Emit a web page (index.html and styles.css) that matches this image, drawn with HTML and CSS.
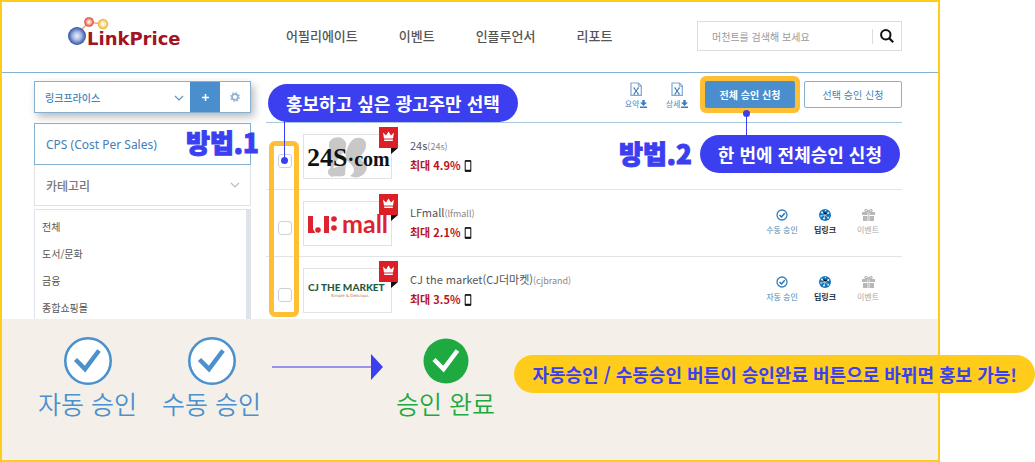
FILE: index.html
```html
<!DOCTYPE html>
<html lang="ko">
<head>
<meta charset="utf-8">
<title>LinkPrice</title>
<link rel="stylesheet" href="styles.css">
</head>
<body>
<svg class="defs" aria-hidden="true">
  <defs>
    <radialGradient id="blue"><stop offset="0" stop-color="#e9f0fa"/><stop offset=".45" stop-color="#a9bce2"/><stop offset="1" stop-color="#2f50a4"/></radialGradient>
    <radialGradient id="red"><stop offset="0" stop-color="#fff"/><stop offset=".4" stop-color="#f8c4b0"/><stop offset="1" stop-color="#dd3a24"/></radialGradient>
    <radialGradient id="gold"><stop offset="0" stop-color="#fff"/><stop offset=".4" stop-color="#fdeab4"/><stop offset="1" stop-color="#eeb02c"/></radialGradient>
    <symbol id="crown" viewBox="0 0 20 27">
      <path d="M12 21h7l-7 6z" fill="#111"/><path d="M0 0h19v21H0z" fill="#dc1f26"/>
      <path d="M4 5.500l3 3 2.500-4 2.500 4 3-3-1 6H5zM5.200 12.500h8.600v1.600H5.200z" fill="#fff"/>
    </symbol>
    <symbol id="phone" viewBox="0 0 8 12"><path d="M1.200.7h5.600v10.600H1.200z" fill="#fff" stroke="#111" stroke-width="1"/><path d="M1 .4h6v1.300H1zM1 9.800h6v1.700H1z" fill="#111"/></symbol>
    <symbol id="check" viewBox="0 0 12 12"><circle cx="6" cy="6" r="5" fill="#fff" stroke="#337fbd" stroke-width="1.300"/><path d="M3.500 6l2 2 3.200-3.700" fill="none" stroke="#2d6fae" stroke-width="1.500"/></symbol>
    <symbol id="link" viewBox="0 0 12 12"><circle cx="6" cy="6" r="6" fill="#1673b9"/><path d="M3 3.500l3 2.500 3.500-2M6 6l-1 4M6 6l3.500 3M2 7l4-1" stroke="#d8ecf8" stroke-width=".6"/><g fill="#d8ecf8"><circle cx="3" cy="3.500" r="1.100"/><circle cx="9.300" cy="4" r="1.100"/><circle cx="5" cy="9.500" r="1.100"/><circle cx="9.200" cy="8.700" r=".9"/><circle cx="2" cy="7" r=".8"/><circle cx="6.500" cy="1.500" r=".7"/></g></symbol>
    <symbol id="gift" viewBox="0 0 13 12"><path d="M0 3h5.600v3H0zM7.400 3H13v3H7.400zM1 7h4.600v5H1zM7.400 7H12v5H7.400z" fill="#b8b8b8"/><path d="M6.500 3v9" stroke="#ccc" stroke-width="1"/><path d="M6.500 3C5 3 2.500 2.500 3 1.200S6 .8 6.500 3C7 .8 9.500-.1 10 1.200S8 3 6.500 3" fill="none" stroke="#b8b8b8" stroke-width="1.200"/></symbol>
    <symbol id="excel" viewBox="0 0 12 14"><path d="M1 1h7.500L11.300 4v9.300H1z" fill="#fff" stroke="#7ba9d3" stroke-width="1.200"/><path d="M8.300 1v3.200h3" fill="none" stroke="#7ba9d3"/><path d="M4 6l4.300 6M8.300 6L4 12M3.300 6h1.800M7.300 6H9M3.300 12h1.800M7.300 12H9" stroke="#3d7cb9" stroke-width="1.100"/></symbol>
    <symbol id="down" viewBox="0 0 7 8"><path d="M2.300 0h2.400v2.500H7L3.500 6 0 2.500h2.300zM0 6.500h7V8H0z" fill="#3a7dbf"/></symbol>
  </defs>
</svg>

<div class="frame">
  <header class="header">
    <a class="logo" href="#">
      <svg width="114" height="32" viewBox="0 0 114 32" role="img" aria-label="LinkPrice">
        <path d="M11 16l10-10 13 2" fill="none" stroke="#e9a987" stroke-width="1.500"/>
        <circle cx="9" cy="20" r="9" fill="url(#blue)"/><circle cx="21" cy="6" r="4.800" fill="url(#red)"/><circle cx="35" cy="8" r="5.200" fill="url(#gold)"/>
        <text class="logo-word" x="19" y="29">LinkPrice</text>
      </svg>
    </a>
    <nav class="nav"><a href="#">어필리에이트</a><a href="#">이벤트</a><a href="#">인플루언서</a><a href="#">리포트</a></nav>
    <form class="search">
      <input type="search" placeholder="머천트를 검색해 보세요" aria-label="머천트 검색">
      <button type="button" aria-label="검색"><svg width="14" height="14" viewBox="0 0 14 14"><circle cx="5.800" cy="5.800" r="4.700" fill="none" stroke="#111" stroke-width="2"/><path d="M9.200 9.200l4 4" stroke="#111" stroke-width="2.200"/></svg></button>
    </form>
  </header>

  <div class="content">
    <aside class="side">
      <div class="account">
        <select aria-label="계정"><option>링크프라이스</option></select>
        <svg class="chevron" width="10" height="6" viewBox="0 0 10 6"><path d="M1 1l4 4 4-4" fill="none" stroke="#5b93c4" stroke-width="1.200"/></svg>
        <button class="add" type="button" aria-label="추가"><svg width="7" height="7" viewBox="0 0 7 7"><path d="M3.500 0v7M0 3.500h7" stroke="#fff" stroke-width="1.600"/></svg></button>
        <button class="gear" type="button" aria-label="설정"><svg width="10" height="10" viewBox="0 0 10 10"><circle cx="5" cy="5" r="4.200" fill="none" stroke="#9dbbd9" stroke-width="1.500" stroke-dasharray="1.650 1.650"/><circle cx="5" cy="5" r="2.900" fill="none" stroke="#8fb2d4" stroke-width="1.700"/></svg></button>
      </div>
      <button class="type" type="button">CPS (Cost Per Sales)</button>
      <button class="category" type="button">카테고리<svg width="10" height="6" viewBox="0 0 10 6"><path d="M1 1l4 4 4-4" fill="none" stroke="#b5bdc6" stroke-width="1.200"/></svg></button>
      <ul class="options"><li>전체</li><li>도서/문화</li><li>금융</li><li>종합쇼핑몰</li></ul>
      <strong class="method method-one">방법.1</strong>
    </aside>

    <main class="main">
      <div class="toolbar">
        <button class="export" type="button"><svg width="12" height="14"><use href="#excel"/></svg><span>요약<svg width="7" height="8"><use href="#down"/></svg></span></button>
        <button class="export" type="button"><svg width="12" height="14"><use href="#excel"/></svg><span>상세<svg width="7" height="8"><use href="#down"/></svg></span></button>
        <button class="apply apply-all" type="button">전체 승인 신청</button>
        <button class="apply" type="button">선택 승인 신청</button>
      </div>
      <ul class="merchants">
        <li class="merchant">
          <input type="checkbox" aria-label="24s">
          <div class="thumb">
            <svg width="87" height="43" viewBox="0 0 87 43" role="img" aria-label="24S.com">
              <g fill="#c8c8c8"><path d="M25 10C25 1 39-1 42 8c2 9-10 14-13 26 5-4 10-2 13-7l-1 13c-5 3-9 0-14 2z"/><circle cx="29" cy="9" r="4"/><circle cx="28" cy="37" r="4"/><path d="M41 24C43 8 49 1 57 3c9 3 5 14-2 19l8 9c0 9-9 14-17 10 8-5 3-11-5-17z"/></g>
              <text class="mark-24s" x="3" y="31">24S<tspan class="mark-com">·com</tspan></text>
            </svg>
            <svg class="badge" width="20" height="27"><use href="#crown"/></svg>
          </div>
          <div class="info"><p class="name">24s<small>(24s)</small></p><p class="rate">최대 4.9%<svg width="8" height="12"><use href="#phone"/></svg></p></div>
        </li>
        <li class="merchant">
          <input type="checkbox" aria-label="LFmall">
          <div class="thumb">
            <svg width="87" height="43" viewBox="0 0 87 43" role="img" aria-label="LF mall">
              <g fill="#dc2430"><path d="M4 14h5v13q2 3 2 4H4zM20 14h5v17h-5z"/><circle cx="14" cy="28" r="2.800"/><circle cx="30" cy="17" r="2.800"/><circle cx="30" cy="26" r="2.800"/></g>
              <text class="mark-mall" x="38" y="31">mall</text>
            </svg>
            <svg class="badge" width="20" height="27"><use href="#crown"/></svg>
          </div>
          <div class="info"><p class="name">LFmall<small>(lfmall)</small></p><p class="rate">최대 2.1%<svg width="8" height="12"><use href="#phone"/></svg></p></div>
          <div class="actions">
            <button type="button"><svg width="12" height="12"><use href="#check"/></svg>수동 승인</button>
            <button class="deep" type="button"><svg width="12" height="12"><use href="#link"/></svg>딥링크</button>
            <button class="event" type="button"><svg width="13" height="12"><use href="#gift"/></svg>이벤트</button>
          </div>
        </li>
        <li class="merchant">
          <input type="checkbox" aria-label="CJ the market">
          <div class="thumb">
            <svg width="87" height="43" viewBox="0 0 87 43" role="img" aria-label="CJ THE MARKET">
              <text class="mark-cj" x="4" y="22">CJ THE MARKET</text>
              <text class="mark-sub" x="27" y="28">Simple &amp; Delicious</text>
            </svg>
            <svg class="badge" width="20" height="27"><use href="#crown"/></svg>
          </div>
          <div class="info"><p class="name">CJ the market(CJ더마켓)<small>(cjbrand)</small></p><p class="rate">최대 3.5%<svg width="8" height="12"><use href="#phone"/></svg></p></div>
          <div class="actions">
            <button type="button"><svg width="12" height="12"><use href="#check"/></svg>자동 승인</button>
            <button class="deep" type="button"><svg width="12" height="12"><use href="#link"/></svg>딥링크</button>
            <button class="event" type="button"><svg width="13" height="12"><use href="#gift"/></svg>이벤트</button>
          </div>
        </li>
      </ul>
      <div class="check-outline"></div>
      <div class="pin pin-one"></div>
      <p class="pill pill-one">홍보하고 싶은 광고주만 선택</p>
      <div class="pin pin-two"></div>
      <div class="guide-two"><strong class="method">방법.2</strong><p class="pill">한 번에 전체승인 신청</p></div>
    </main>
  </div>

  <section class="steps">
    <div class="step"><svg width="48" height="48" viewBox="0 0 48 48"><circle cx="24" cy="24" r="22.700" fill="#fff" stroke="#4b91cd" stroke-width="2.600"/><path d="M11.500 22.500l9.500 9.500 14-18.500" fill="none" stroke="#4b91cd" stroke-width="4.500"/></svg>자동 승인</div>
    <div class="step"><svg width="48" height="48" viewBox="0 0 48 48"><circle cx="24" cy="24" r="22.700" fill="#fff" stroke="#4b91cd" stroke-width="2.600"/><path d="M11.500 22.500l9.500 9.500 14-18.500" fill="none" stroke="#4b91cd" stroke-width="4.500"/></svg>수동 승인</div>
    <svg class="arrow" width="111" height="26" viewBox="0 0 111 26"><path d="M0 13h100" stroke="#7775ea" stroke-width="1.500"/><path d="M99 0l12 13-12 13z" fill="#3b3ff0"/></svg>
    <div class="step done"><svg width="48" height="48" viewBox="0 0 48 48"><circle cx="24" cy="24" r="22.500" fill="#1ea941"/><path d="M12 22.500l9.500 9.500 14-18.500" fill="none" stroke="#fff" stroke-width="4.500"/></svg>승인 완료</div>
    <p class="pill notice">자동승인 / 수동승인 버튼이 승인완료 버튼으로 바뀌면 홍보 가능!</p>
  </section>
</div>
</body>
</html>
```
FILE: styles.css
```css
* { box-sizing: border-box; }
body {
  margin: 0;
  padding-right: 95px;
  background: #fff;
  color: #555;
  font-family: "Noto Sans CJK KR", sans-serif;
  font-size: 12px;
}
p, ul { margin: 0; padding: 0; list-style: none; }
a { color: inherit; text-decoration: none; }
svg { display: block; flex: none; }
button, input, select { font: inherit; color: inherit; }
button { padding: 0; border: 0; background: none; }
.defs { position: absolute; width: 0; height: 0; }

.frame {
  display: flex;
  flex-direction: column;
  min-height: 100vh;
  border: 2px solid #ffcc1c;
}

/* Header */
.header {
  display: flex;
  align-items: center;
  padding: 14px 36px 14px 66px;
  height: 71px;
  border-bottom: 1px solid #86b0d0;
}
.logo { margin: 0 104px 10px 0; }
.logo-word { font: bold 18px "DejaVu Sans", sans-serif; fill: #a01424; }
.nav { display: flex; gap: 41px; margin-bottom: 4px; font-size: 13px; font-weight: 500; white-space: nowrap; }
.search {
  display: flex;
  align-items: center;
  width: 205px;
  height: 30px;
  margin-left: auto;
  margin-bottom: 2px;
  border: 1px solid #ddd;
}
.search input {
  flex: 1;
  min-width: 0;
  height: 15px;
  padding: 0 14px;
  border: 0;
  border-right: 1px solid #ddd;
  outline: 0;
  font-size: 10px;
}
.search input::placeholder { color: #999; }
.search button { padding: 0 7px; }

/* Columns */
.content { display: flex; gap: 15px; padding: 0 36px 0 32px; height: 246px; }
.side { position: relative; width: 217px; padding-top: 8px; }
.account {
  position: relative;
  display: flex;
  height: 32px;
  border: 1px solid #86b0d0;
  background: #fff;
  box-shadow: 3px 4px 8px #bbb;
}
.account select {
  flex: 1;
  min-width: 0;
  padding: 0 10px;
  border: 0;
  appearance: none;
  background: none;
  color: #4084c0;
  font-size: 10px;
  font-weight: 500;
}
.chevron { position: absolute; right: 66px; top: 13px; }
.account button { display: grid; place-items: center; width: 30px; }
.account .add { background: #4b8ecd; }
.type, .category {
  display: flex;
  align-items: center;
  justify-content: space-between;
  width: 100%;
  padding: 0 10px 0 11px;
}
.type {
  height: 42px;
  margin-top: 10px;
  border: 1px solid #86b0d0;
  color: #4580b8;
  font-family: "Noto Sans", sans-serif;
}
.category { height: 41px; border: 1px solid #e2e2e2; border-top: 0; color: #777; font-weight: 500; }
.options {
  height: 113px;
  margin-top: 3px;
  padding: 3px 7px;
  border: 1px solid #dfe2ea;
  border-right: 5px solid #dfe2ea;
  border-bottom: 0;
  font-size: 10px;
  line-height: 27px;
}

/* Merchant list */
.main { position: relative; flex: 1; }
.toolbar {
  display: flex;
  justify-content: flex-end;
  height: 50px;
  padding-top: 8px;
  border-bottom: 1px solid #a8c8dc;
}
.export {
  display: flex;
  flex-direction: column;
  align-items: center;
  align-self: flex-start;
  gap: 2px;
  width: 26px;
  margin: 1px 15px 0 0;
  color: #4b88bc;
  font-size: 8px;
  line-height: 12px;
  white-space: nowrap;
}
.export span { display: flex; align-items: center; gap: 1px; }
.apply {
  width: 98px;
  height: 27px;
  border: 1px solid #86b0d0;
  border-radius: 2px;
  color: #4580b8;
  font-size: 10px;
}
.apply-all {
  width: 90px;
  margin-right: 9px;
  border: 0;
  background: #4b8ecd;
  box-shadow: 0 0 0 5px #ffbf35;
  color: #fff;
  font-weight: 700;
}
.merchant {
  display: flex;
  align-items: flex-start;
  height: 67px;
  border-bottom: 1px solid #e4e4e4;
}
.merchant:last-child { height: 63px; border: 0; }
.merchant input {
  width: 14px;
  height: 14px;
  margin: 31px 11px 0 12px;
  border: 1px solid #ccd2d8;
  border-radius: 3px;
  appearance: none;
  background: #fff;
}
.thumb { position: relative; margin-top: 11px; border: 1px solid #e2e2e2; }
.badge { position: absolute; top: -8px; right: -8px; }
.mark-24s { font: bold 26px "Liberation Serif", serif; fill: #111; }
.mark-com { font-size: 20px; }
.mark-mall { font: bold 25px Lato, sans-serif; fill: #dc2430; }
.mark-cj { font: 900 10px Lato, sans-serif; fill: #1f5a43; }
.mark-sub { font: 4px "DejaVu Sans", sans-serif; fill: #b9744c; }
.info { padding: 13px 0 0 18px; line-height: 19px; }
.name { font-size: 11px; }
.name small { color: #888; font-size: 9px; line-height: 1; }
.rate { display: flex; align-items: center; gap: 4px; margin-top: 1px; color: #b8141f; font-size: 11px; font-weight: 700; }
.actions { display: flex; gap: 3px; margin: 19px 14px 0 auto; }
.actions button {
  display: flex;
  flex-direction: column;
  align-items: center;
  gap: 3px;
  width: 40px;
  color: #4b88b4;
  font-size: 8px;
  line-height: 12px;
  white-space: nowrap;
}
.actions .deep { color: #222b44; font-weight: 700; }
.actions .event { color: #aaa; }

/* Guide callouts over the list */
.pill {
  padding: 0 18px;
  border-radius: 19px;
  background: #3b3ff0;
  color: #fff;
  font-size: 18px;
  font-weight: 700;
  line-height: 38px;
  white-space: nowrap;
}
.method {
  color: #3b3ff0;
  font-size: 26px;
  font-weight: 900;
  line-height: 36px;
  white-space: nowrap;
  -webkit-text-stroke: 1px #3b3ff0;
}
.method-one { position: absolute; top: 51px; left: 152px; z-index: 2; }
.check-outline {
  position: absolute;
  top: 68px;
  bottom: 2px;
  left: 3px;
  width: 30px;
  border: 5px solid #ffbf35;
  border-radius: 6px;
}
.pill-one { position: absolute; top: 11px; left: 2px; }
.pin { position: absolute; width: 1px; background: #3b3ff0; }
.pin::after {
  position: absolute;
  left: -3px;
  width: 7px;
  height: 7px;
  border-radius: 50%;
  background: #3b3ff0;
  content: "";
}
.pin-one { top: 48px; left: 18px; height: 40px; }
.pin-one::after { bottom: -3px; }
.pin-two { top: 40px; right: 155px; height: 24px; }
.pin-two::after { top: -3px; }
.guide-two { position: absolute; top: 62px; right: 2px; display: flex; gap: 8px; }

/* Approval steps */
.steps {
  position: relative;
  display: flex;
  flex: 1;
  align-items: flex-start;
  padding: 18px 0 0 36px;
  background: #f4f0e9;
}
.step {
  display: flex;
  flex-direction: column;
  align-items: center;
  margin-right: 25px;
  color: #4b91cd;
  font-size: 25px;
  font-weight: 350;
  line-height: 36px;
  white-space: nowrap;
}
.arrow { margin: 17px 13px 0 -14px; }
.step.done { margin: 0; color: #1ea941; }
.notice { position: absolute; top: 36px; right: -97px; background: #ffcc1c; color: #3b3ff0; }
```
